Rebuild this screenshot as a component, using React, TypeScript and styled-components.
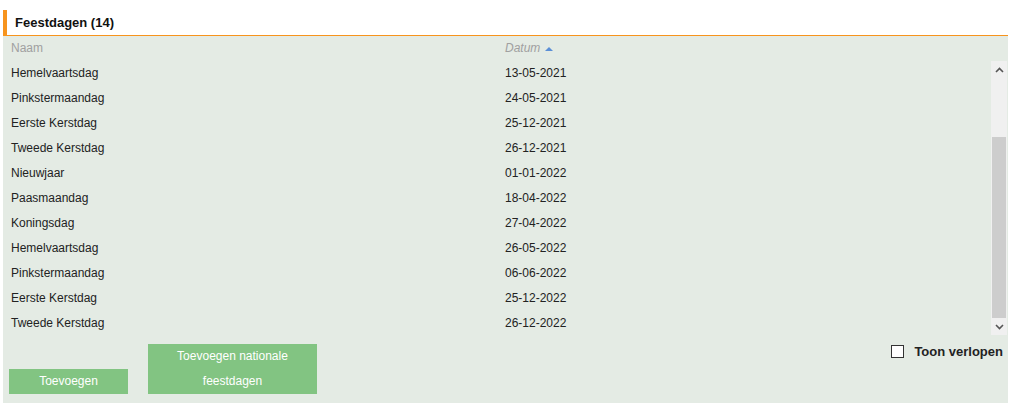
import React, { useLayoutEffect, useRef } from 'react'
import styled, { createGlobalStyle } from 'styled-components'

type Holiday = {
  name: string
  date: string
}

const HOLIDAYS: Holiday[] = [
  { name: 'Nieuwjaar', date: '01-01-2021' },
  { name: 'Paasmaandag', date: '05-04-2021' },
  { name: 'Koningsdag', date: '27-04-2021' },
  { name: 'Hemelvaartsdag', date: '13-05-2021' },
  { name: 'Pinkstermaandag', date: '24-05-2021' },
  { name: 'Eerste Kerstdag', date: '25-12-2021' },
  { name: 'Tweede Kerstdag', date: '26-12-2021' },
  { name: 'Nieuwjaar', date: '01-01-2022' },
  { name: 'Paasmaandag', date: '18-04-2022' },
  { name: 'Koningsdag', date: '27-04-2022' },
  { name: 'Hemelvaartsdag', date: '26-05-2022' },
  { name: 'Pinkstermaandag', date: '06-06-2022' },
  { name: 'Eerste Kerstdag', date: '25-12-2022' },
  { name: 'Tweede Kerstdag', date: '26-12-2022' },
]

const GlobalStyle = createGlobalStyle`
  body {
    margin: 0;
    background: #ffffff;
    font-family: Arial, 'Liberation Sans', sans-serif;
    font-size: 12px;
    color: #222;
  }
`

const Page = styled.div`
  padding: 10px 7px 6px 3px;
`

const Header = styled.div`
  display: flex;
  align-items: center;
  height: 25px;
  padding-left: 8px;
  border-left: 4px solid #f7941d;
  border-bottom: 1px solid #f7941d;
  font-weight: bold;
  font-size: 13px;
  color: #111;
`

const Panel = styled.div`
  background: #e4ebe4;
  display: flex;
  flex-direction: column;
`

const ColumnHeads = styled.div`
  display: flex;
  height: 24px;
  align-items: center;
  padding-left: 8px;
  padding-bottom: 1px;
  color: #a0a0a0;
`

const Column = styled.div<{ $width?: number; $italic?: boolean }>`
  width: ${(p) => (p.$width ? `${p.$width}px` : 'auto')};
  flex: ${(p) => (p.$width ? 'none' : '1')};
  font-style: ${(p) => (p.$italic ? 'italic' : 'normal')};
  display: flex;
  align-items: center;
  gap: 5px;
`

const SortArrow = styled.span`
  width: 0;
  height: 0;
  border-left: 4px solid transparent;
  border-right: 4px solid transparent;
  border-bottom: 4px solid #5b8fd6;
  margin-top: 1px;
`

const ListArea = styled.div`
  display: flex;
  height: 274px;
`

const Rows = styled.div`
  flex: 1;
  overflow: hidden;
`

const Row = styled.div`
  display: flex;
  height: 25px;
  align-items: center;
  padding-left: 8px;
`

const ScrollBar = styled.div`
  width: 16px;
  margin-right: 1px;
  background: #f0f0f0;
  display: flex;
  flex-direction: column;
`

const ScrollButton = styled.div`
  height: 17px;
  display: flex;
  align-items: center;
  justify-content: center;
`

const ScrollTrack = styled.div`
  flex: 1;
  display: flex;
  flex-direction: column;
  justify-content: flex-end;
  padding: 0 1px;
`

const ScrollThumb = styled.div`
  height: 181px;
  background: #cdcdcd;
`

const Footer = styled.div`
  display: flex;
  align-items: flex-end;
  padding: 9px 6px 9px 6px;
  gap: 20px;
`

const Button = styled.button<{ $width: number }>`
  width: ${(p) => p.$width}px;
  min-height: 25px;
  padding: 0 6px;
  border: none;
  background: #82c482;
  color: #ffffff;
  font-family: Arial, 'Liberation Sans', sans-serif;
  font-size: 12px;
  line-height: 25px;
  cursor: pointer;
`

const Spacer = styled.div`
  flex: 1;
`

const CheckLabel = styled.label`
  align-self: flex-start;
  display: flex;
  align-items: center;
  gap: 10px;
  margin-right: -1px;
  font-weight: bold;
  font-size: 13px;
  color: #222;
`

const CheckBox = styled.span`
  width: 11px;
  height: 11px;
  border: 1px solid #333;
  background: #fff;
`

const Chevron = ({ up }: { up?: boolean }) => (
  <svg width="9" height="6" viewBox="0 0 9 6">
    <path
      d={up ? 'M1 5 L4.5 1.5 L8 5' : 'M1 1 L4.5 4.5 L8 1'}
      fill="none"
      stroke="#555"
      strokeWidth="1.6"
    />
  </svg>
)

export default function App() {
  const rowsRef = useRef<HTMLDivElement>(null)

  useLayoutEffect(() => {
    if (rowsRef.current) {
      rowsRef.current.scrollTop = rowsRef.current.scrollHeight
    }
  }, [])

  return (
    <Page>
      <GlobalStyle />
      <Header>Feestdagen ({HOLIDAYS.length})</Header>
      <Panel>
        <ColumnHeads>
          <Column $width={494}>Naam</Column>
          <Column $italic>
            Datum <SortArrow />
          </Column>
        </ColumnHeads>
        <ListArea>
          <Rows ref={rowsRef}>
            {HOLIDAYS.map((h) => (
              <Row key={h.date}>
                <Column $width={494}>{h.name}</Column>
                <Column>{h.date}</Column>
              </Row>
            ))}
          </Rows>
          <ScrollBar>
            <ScrollButton>
              <Chevron up />
            </ScrollButton>
            <ScrollTrack>
              <ScrollThumb />
            </ScrollTrack>
            <ScrollButton>
              <Chevron />
            </ScrollButton>
          </ScrollBar>
        </ListArea>
        <Footer>
          <Button $width={119}>Toevoegen</Button>
          <Button $width={169}>Toevoegen nationale feestdagen</Button>
          <Spacer />
          <CheckLabel>
            <CheckBox />
            Toon verlopen
          </CheckLabel>
        </Footer>
      </Panel>
    </Page>
  )
}
